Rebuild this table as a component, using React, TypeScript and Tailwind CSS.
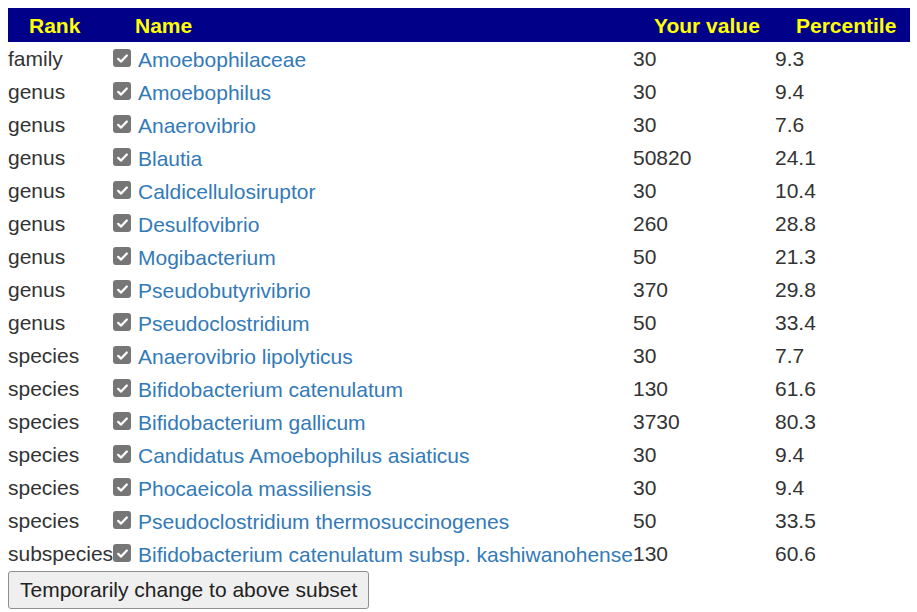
import * as React from "react";

type Row = { rank: string; name: string; value: string; pct: string };

const rows: Row[] = [
    { rank: "family", name: "Amoebophilaceae", value: "30", pct: "9.3" },
    { rank: "genus", name: "Amoebophilus", value: "30", pct: "9.4" },
    { rank: "genus", name: "Anaerovibrio", value: "30", pct: "7.6" },
    { rank: "genus", name: "Blautia", value: "50820", pct: "24.1" },
    { rank: "genus", name: "Caldicellulosiruptor", value: "30", pct: "10.4" },
    { rank: "genus", name: "Desulfovibrio", value: "260", pct: "28.8" },
    { rank: "genus", name: "Mogibacterium", value: "50", pct: "21.3" },
    { rank: "genus", name: "Pseudobutyrivibrio", value: "370", pct: "29.8" },
    { rank: "genus", name: "Pseudoclostridium", value: "50", pct: "33.4" },
    { rank: "species", name: "Anaerovibrio lipolyticus", value: "30", pct: "7.7" },
    { rank: "species", name: "Bifidobacterium catenulatum", value: "130", pct: "61.6" },
    { rank: "species", name: "Bifidobacterium gallicum", value: "3730", pct: "80.3" },
    { rank: "species", name: "Candidatus Amoebophilus asiaticus", value: "30", pct: "9.4" },
    { rank: "species", name: "Phocaeicola massiliensis", value: "30", pct: "9.4" },
    { rank: "species", name: "Pseudoclostridium thermosuccinogenes", value: "50", pct: "33.5" },
    { rank: "subspecies", name: "Bifidobacterium catenulatum subsp. kashiwanohense", value: "130", pct: "60.6" },
];

// Checked box, drawn like the browser's native one
function CheckBox() {
    return (
        <span className="mt-[7px] flex h-[18px] w-[18px] shrink-0 items-center justify-center rounded-[3px] bg-[#767676]">
            <svg viewBox="0 0 16 16" className="h-[15px] w-[15px]">
                <path
                    d="M3.4 8.4 L6.5 11.3 L12.6 4.8"
                    fill="none"
                    stroke="white"
                    strokeWidth="2.4"
                    strokeLinecap="round"
                    strokeLinejoin="round"
                />
            </svg>
        </span>
    );
}

export default function App() {
    return (
        <div className="min-h-[612px] bg-white p-2 text-[21px] text-[#333] [font-family:'Liberation_Sans',Arial,sans-serif]">
            <table className="w-[902px] table-fixed border-collapse">
                <thead>
                    <tr className="h-[34px] bg-[#000088] text-[#ffff00]">
                        <th className="w-[105px] p-0 pl-[21px] pt-[1px] text-left font-bold leading-[33px]">Rank</th>
                        <th className="w-[520px] p-0 pl-[22px] pt-[1px] text-left font-bold leading-[33px]">Name</th>
                        <th className="w-[142px] p-0 pl-[21px] pt-[1px] text-left font-bold leading-[33px]">Your value</th>
                        <th className="w-[135px] p-0 pl-[21px] pt-[1px] text-left font-bold leading-[33px]">Percentile</th>
                    </tr>
                </thead>
                <tbody>
                    {rows.map((r) => (
                        <tr key={r.name} className="h-[33px]">
                            <td className="overflow-visible whitespace-nowrap p-0 align-top leading-[33px]">{r.rank}</td>
                            <td className="p-0 align-top">
                                <div className="flex h-[33px] whitespace-nowrap">
                                    <CheckBox />
                                    <a href="#" className="ml-[7px] pt-[3px] leading-[29px] text-[#337ab7] no-underline">
                                        {r.name}
                                    </a>
                                </div>
                            </td>
                            <td className="p-0 align-top leading-[33px]">{r.value}</td>
                            <td className="p-0 align-top leading-[33px]">{r.pct}</td>
                        </tr>
                    ))}
                </tbody>
            </table>
            <button className="mt-[1px] h-[38px] rounded-[3px] border border-[#8f8f8f] bg-[#efefef] px-[11px] text-[21px] leading-[24px] text-[#222]">
                Temporarily change to above subset
            </button>
        </div>
    );
}
